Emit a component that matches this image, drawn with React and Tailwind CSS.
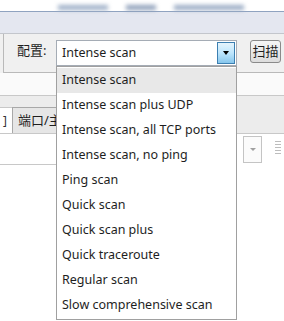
import { useState } from "react";

const scans = [
  "Intense scan",
  "Intense scan plus UDP",
  "Intense scan, all TCP ports",
  "Intense scan, no ping",
  "Ping scan",
  "Quick scan",
  "Quick scan plus",
  "Quick traceroute",
  "Regular scan",
  "Slow comprehensive scan",
];

export default function App() {
  const [selected] = useState(0);

  return (
    <div className="relative w-[284px] h-[321px] overflow-hidden bg-white text-[12.5px] text-[#1e1e1e] font-['Noto_Sans','Noto_Sans_CJK_SC',sans-serif]">
      {/* blurred title strip */}
      <div className="h-[11px] flex items-end gap-[18px] pl-[58px] pb-[1px] bg-white">
        <div className="w-[50px] h-[5px] bg-[#9fb0c8] blur-[2px]" />
        <div className="w-[30px] h-[5px] bg-[#8fa0ba] blur-[2px]" />
        <div className="w-[70px] h-[5px] bg-[#9aabc4] blur-[2px]" />
      </div>
      <div className="h-px bg-[#8fa3c0]" />
      <div className="h-[21px] bg-[#e4e7f0]" />
      <div className="h-px bg-[#c3c6cc]" />

      {/* toolbar */}
      <div className="h-[39px] flex bg-[#f0f0f0]">
        <div className="w-[3px]" />
        <div className="flex-1 flex border-l border-b border-[#b9b9b9]">
          <div className="w-[52px] flex items-center pl-[13px] pb-[5px] text-[13px]">配置:</div>
          <div className="w-[181px]" />
          <div className="flex-1 flex items-start pt-[6px] pl-[13px]">
            <div className="w-[31px] h-[23px] flex items-center justify-center rounded-[3px] border border-[#8a8a8a] bg-gradient-to-b from-[#f6f6f6] to-[#dcdcdc] text-[13px]">
              扫描
            </div>
          </div>
        </div>
      </div>

      {/* tab strip area */}
      <div className="h-[22px] bg-[#fafafa]" />
      <div className="h-[38px] flex flex-col bg-[#ececec] border-t border-[#c8c8c8]">
        <div className="h-[11px]" />
        <div className="flex-1 flex">
          <div className="w-[12px] bg-white border-t border-[#c8c8c8] flex items-center text-[12px] pl-[3px] text-[#333]">
            ]
          </div>
          <div className="w-[70px] flex items-center pl-[5px] bg-[#e6e6e6] border-l border-t border-r border-[#a8a8a8] text-[13px] whitespace-nowrap">
            端口/主机
          </div>
        </div>
      </div>
      <div className="h-[31px] flex items-start border-t border-[#c8c8c8] bg-white">
        <div className="w-[243px]" />
        <div className="w-[19px] h-[27px] mt-[2px] flex items-center justify-center border border-[#c4c4c4] bg-[#fbfbfb]">
          <div className="w-0 h-0 border-l-[3px] border-r-[3px] border-t-[3px] border-l-transparent border-r-transparent border-t-[#a0a0a0]" />
        </div>
        <div className="ml-[13px] mt-[7px] flex flex-col gap-[2px]">
          <div className="w-[6px] h-px bg-[#bdbdbd]" />
          <div className="w-[6px] h-px bg-[#bdbdbd]" />
          <div className="w-[6px] h-px bg-[#bdbdbd]" />
          <div className="w-[6px] h-px bg-[#bdbdbd]" />
          <div className="w-[6px] h-px bg-[#bdbdbd]" />
        </div>
      </div>
      <div className="h-px bg-[#c8c8c8] w-[60px]" />

      {/* combo box */}
      <div className="absolute left-[56px] top-[40px] w-[181px] h-[26px] flex border border-[#a5acb5] bg-white">
        <div className="flex-1 flex items-center pl-[5px]">Intense scan</div>
        <div className="w-[18px] m-px flex items-center justify-center border border-[#3c7fb1] bg-gradient-to-b from-[#e5f4fc] via-[#bee6fd] to-[#86c6ec]">
          <div className="w-0 h-0 border-l-[3.5px] border-r-[3.5px] border-t-[4px] border-l-transparent border-r-transparent border-t-black" />
        </div>
      </div>

      {/* dropdown list */}
      <div className="absolute left-[56px] top-[66px] w-[181px] h-[254px] border border-[#a0a0a0] bg-white flex flex-col py-px">
        {scans.map((s, i) => (
          <div
            key={i}
            className={`h-[25px] flex items-center pl-[5px] whitespace-nowrap ${
              i === selected ? "bg-[#e8e8e8]" : ""
            }`}
          >
            {s}
          </div>
        ))}
      </div>
    </div>
  );
}
